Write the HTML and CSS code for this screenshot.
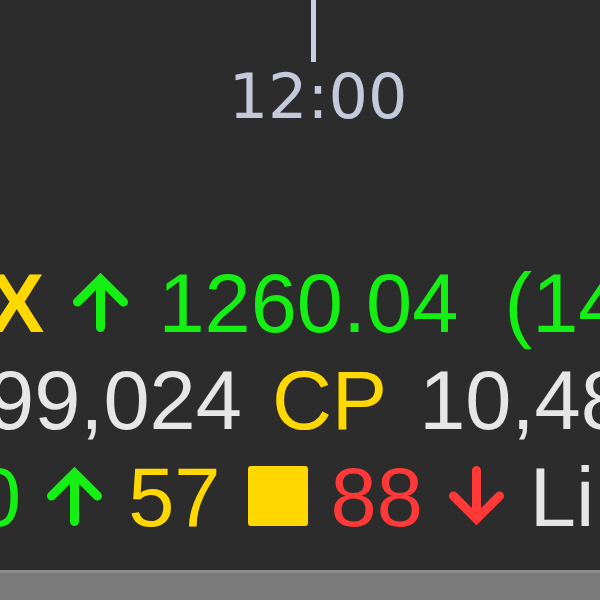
FILE: index.html
```html
<!DOCTYPE html>
<html>
  <head>
    <title>ticker</title>
    <link rel="stylesheet" href="styles.css">
    <meta name="viewport" content="width=device-width, initial-scale=1" />
  </head>
  <body>
    <div class="screen">
      <div class="axis">
        <div class="tick"></div>
        <div class="time">12:00</div>
      </div>
      <div class="ticker">
        <div class="row row-index">
          <b class="yellow sym">X</b>
          <svg class="arrow green" viewBox="0 0 61 60"><path d="M30.5 55.5 V8 M7.5 30 L30.5 7 L53.5 30" /></svg>
          <span class="green">1260.04&nbsp; (14.25%)</span>
        </div>
        <div class="row row-volume">
          <span class="white lead">99,024</span>
          <span class="yellow cp">CP</span>
          <span class="white">10,487.52</span>
        </div>
        <div class="row row-breadth">
          <span class="green lead">0</span>
          <svg class="arrow green" viewBox="0 0 61 60"><path d="M30.5 55.5 V8 M7.5 30 L30.5 7 L53.5 30" /></svg>
          <span class="yellow">57</span>
          <span class="square"></span>
          <span class="red">88</span>
          <svg class="arrow red" viewBox="0 0 61 60"><path d="M30.5 4.5 V52 M7.5 30 L30.5 53 L53.5 30" /></svg>
          <span class="white">Limit</span>
        </div>
      </div>
      <div class="scrollbar"></div>
    </div>
  </body>
</html>
```
FILE: styles.css
```css
html,
body {
  margin: 0;
  padding: 0;
  height: 100%;
  overflow: hidden;
  background: #2c2c2c;
}
.screen {
  display: flex;
  flex-direction: column;
  height: 100%;
  font-family: "Liberation Sans", Arial, sans-serif;
}
.axis {
  display: flex;
  flex-direction: column;
  align-items: center;
  width: 200px;
  margin-left: 218px;
}
.axis .tick {
  width: 5px;
  height: 62px;
  margin-right: 9px;
  background: #c9d0e2;
}
.axis .time {
  margin-top: 4px;
  font-family: "DejaVu Sans", Verdana, sans-serif;
  font-size: 62px;
  line-height: 62px;
  color: #c4cadb;
}
.ticker {
  margin-top: 127px;
  display: flex;
  flex-direction: column;
}
.ticker .row {
  display: flex;
  align-items: baseline;
  gap: 23px;
  white-space: nowrap;
  font-size: 83px;
  line-height: 97px;
}
.ticker .row > * {
  flex-shrink: 0;
}
.row-index .sym {
  margin-left: -11px;
  margin-right: 3px;
}
.row-index .arrow {
  margin-right: 4px;
}
.row-volume {
  column-gap: 29px;
}
.row-volume .lead {
  margin-left: -12px;
}
.row-volume .cp {
  margin-left: 7px;
  margin-right: 9px;
}
.row-breadth .lead {
  margin-left: -25px;
}
.row-breadth .square {
  width: 60px;
  height: 60px;
  margin-left: 4px;
  border-radius: 3px;
  background: #ffd800;
}
.arrow {
  width: 61px;
  height: 60px;
}
.arrow path {
  fill: none;
  stroke: currentColor;
  stroke-width: 9;
  stroke-linecap: round;
}
.green {
  color: #14f014;
}
.yellow {
  color: #ffd800;
}
.red {
  color: #ff3838;
}
.white {
  color: #e6e6e6;
}
.scrollbar {
  margin-top: auto;
  height: 27px;
  border-top: 3px solid #8c8c8c;
  background: #7a7a7a;
}
```
